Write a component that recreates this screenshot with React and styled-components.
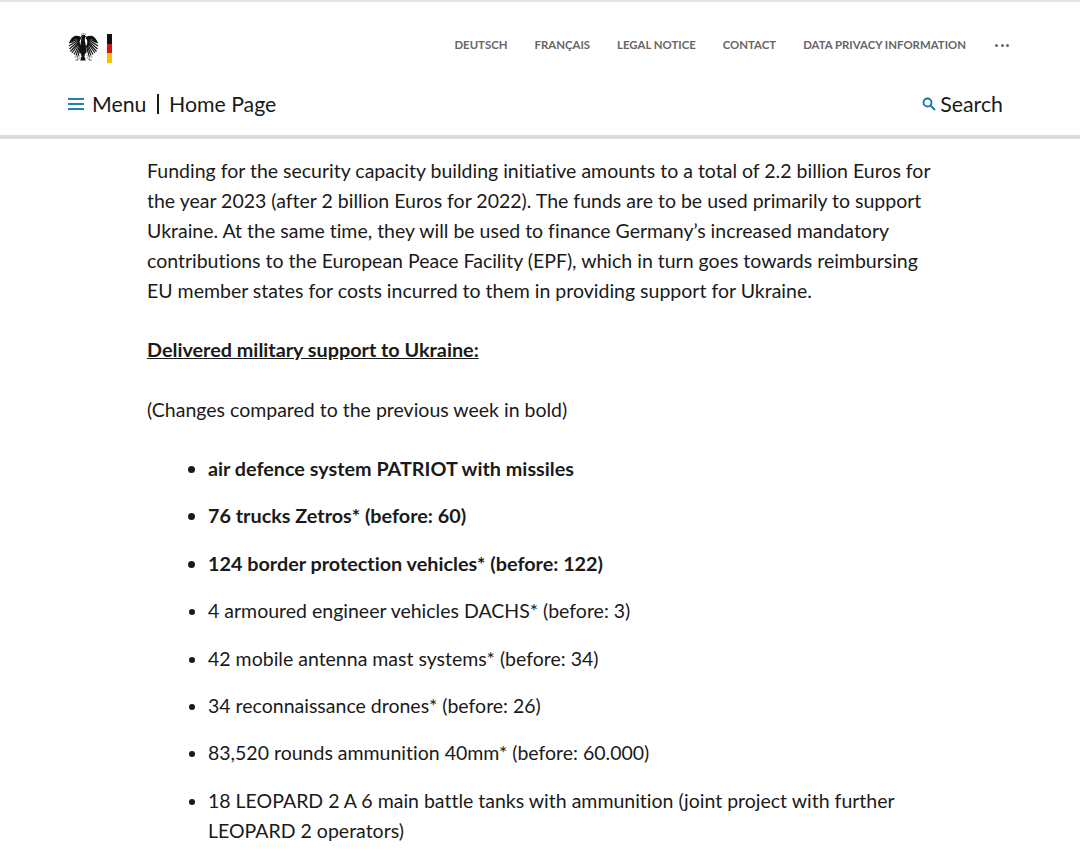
import styled, { createGlobalStyle } from "styled-components";

const GlobalStyle = createGlobalStyle`
  html, body {
    margin: 0;
    padding: 0;
    height: 853px;
    overflow: hidden;
    background: #fff;
    font-family: Lato, "Noto Sans", sans-serif;
    font-variant-ligatures: none;
    color: #1a1a1a;
  }
`;

const Header = styled.header`
  height: 135px;
  box-sizing: border-box;
  border-top: 2px solid #e6e6e6;
  padding: 0 70px 0 68px;
`;

const HeaderRule = styled.div`
  height: 4px;
  background: #dcdcdc;
`;

const TopRow = styled.div`
  display: flex;
  justify-content: space-between;
  align-items: flex-start;
  height: 85px;
  padding-top: 30px;
  box-sizing: border-box;
`;

const Logo = styled.div`
  display: flex;
  align-items: center;
  gap: 8px;
`;

const Flag = styled.div`
  width: 5px;
  height: 29px;
  margin-top: 2px;
  background: linear-gradient(#111 0 33.3%, #d8121a 33.3% 66.6%, #f4c400 66.6%);
`;

const MetaNav = styled.nav`
  display: flex;
  align-items: center;
  gap: 27px;
  height: 24px;
`;

const MetaLink = styled.a`
  font-size: 11.400px;
  font-weight: 700;
  color: #666;
`;

const Dots = styled.span`
  display: flex;
  gap: 2.500px;
  margin: 2px 1px 0 2px;
`;

const Dot = styled.i`
  width: 3px;
  height: 3px;
  border-radius: 50%;
  background: #666;
`;

const BottomRow = styled.div`
  display: flex;
  justify-content: space-between;
  align-items: center;
  height: 34px;
  padding-right: 7px;
`;

const MainLinks = styled.div`
  display: flex;
  align-items: center;
  font-size: 21.300px;
  line-height: 26px;
  color: #1a1a1a;
`;

const Burger = styled.span`
  display: flex;
  flex-direction: column;
  gap: 3px;
  width: 16px;
  margin-right: 8px;
`;

const BurgerLine = styled.i`
  height: 2px;
  background: #1f7fb0;
`;

const Divider = styled.span`
  width: 1.500px;
  height: 20px;
  background: #1a1a1a;
  margin: 0 10px 0 11px;
`;

const SearchLink = styled.div`
  display: flex;
  align-items: center;
  gap: 4px;
  font-size: 21.300px;
  line-height: 26px;
`;

const Content = styled.main`
  padding: 17px 0 0 147px;
  width: 790px;
  font-size: 19.500px;
  line-height: 30px;
`;

const Para = styled.p`
  margin: 0 0 ${(p) => p.$gap || "29.500px"};
`;

const Heading = styled.h2`
  margin: -1.500px 0 31px;
  font-size: 19.800px;
  line-height: 30px;
  font-weight: 700;
  text-decoration: underline;
`;

const List = styled.ul`
  margin: 0;
  padding: 0 0 0 61px;
`;

const Item = styled.li`
  font-size: ${(p) => (p.$bold ? "19.800px" : "19.500px")};
  font-weight: ${(p) => (p.$bold ? 700 : 400)};
  line-height: ${(p) => (p.$bold ? "29px" : "30px")};
  margin-bottom: ${(p) => (p.$bold ? "18.400px" : "17.400px")};
`;

// feather tips of the left wing, the right wing is mirrored
const feathers = [
  ["10 7", "1 11"],
  ["10 8", "1 14"],
  ["10.500 9", "1.500 17"],
  ["11 10", "2.500 19.500"],
  ["11 11", "4 21"],
  ["11.500 12", "6 22.500"],
  ["12 13", "8 23.500"],
  ["12.500 14", "10 24"],
];

function Wing() {
  return (
    <g>
      <path d="M13 5C9 2.500 4 3.500 1.500 10l3 .5C6 7.500 8.500 6 11 8z" fill="#111" />
      <path d="M12.500 5.500C10 8 10 11 12 15" stroke="#111" strokeWidth="2" fill="none" />
      <g stroke="#111" strokeWidth="1.150" fill="none">
        {feathers.map(([from, to]) => (
          <path key={to} d={`M${from}L${to}`} />
        ))}
      </g>
    </g>
  );
}

function Eagle() {
  return (
    <svg width="31" height="31" viewBox="0 0 31 31" aria-hidden="true">
      <Wing />
      <g transform="matrix(-1 0 0 1 31 0)">
        <Wing />
      </g>
      <path
        d="M14 3.500c1-1 2.800-.8 3.200.4l1.800 1.200-2 .3-.2 2.500 1.200 7 .8 5-1.800 2-.6 2.600 1.400 4h-5.600l1.400-4-.6-2.600-1.800-2 .8-5 1.200-7 .2-2.500c-.2-.6-.3-1.500-.3-1.900z"
        fill="#111"
      />
      <g stroke="#8a8a8a" strokeWidth="1" fill="none">
        <path d="M6.500 25c2.500 0 4.500-.5 6-2M7 28c2 .5 4-.5 5.500-3M10 23.500l-1 5.500" />
        <path d="M24.500 25c-2.500 0-4.500-.5-6-2M24 28c-2 .5-4-.5-5.500-3M21 23.500l1 5.500" />
        <path d="M13 2.500c1.500-1 3.500-1 5 0" />
      </g>
    </svg>
  );
}

function SearchIcon() {
  return (
    <svg width="14" height="14" viewBox="0 0 14 14" fill="none" stroke="#0f78a8" strokeWidth="1.800" aria-hidden="true">
      <circle cx="5.500" cy="5.500" r="4" />
      <path d="M8.500 8.500 13 13" />
    </svg>
  );
}

const metaLinks = ["DEUTSCH", "FRANÇAIS", "LEGAL NOTICE", "CONTACT", "DATA PRIVACY INFORMATION"];

const items = [
  { text: "air defence system PATRIOT with missiles", bold: true },
  { text: "76 trucks Zetros* (before: 60)", bold: true },
  { text: "124 border protection vehicles* (before: 122)", bold: true },
  { text: "4 armoured engineer vehicles DACHS* (before: 3)" },
  { text: "42 mobile antenna mast systems* (before: 34)" },
  { text: "34 reconnaissance drones* (before: 26)" },
  { text: "83,520 rounds ammunition 40mm* (before: 60.000)" },
  { text: "18 LEOPARD 2 A 6 main battle tanks with ammunition (joint project with further LEOPARD 2 operators)" },
];

export default function App() {
  return (
    <>
      <GlobalStyle />
      <Header>
        <TopRow>
          <Logo>
            <Eagle />
            <Flag />
          </Logo>
          <MetaNav>
            {metaLinks.map((label) => (
              <MetaLink key={label}>{label}</MetaLink>
            ))}
            <Dots>
              <Dot />
              <Dot />
              <Dot />
            </Dots>
          </MetaNav>
        </TopRow>
        <BottomRow>
          <MainLinks>
            <Burger>
              <BurgerLine />
              <BurgerLine />
              <BurgerLine />
            </Burger>
            Menu
            <Divider />
            Home Page
          </MainLinks>
          <SearchLink>
            <SearchIcon />
            Search
          </SearchLink>
        </BottomRow>
      </Header>
      <HeaderRule />
      <Content>
        <Para>
          Funding for the security capacity building initiative amounts to a total of 2.2 billion Euros for the year
          2023 (after 2 billion Euros for 2022). The funds are to be used primarily to support Ukraine. At the same
          time, they will be used to finance Germany’s increased mandatory contributions to the European Peace Facility
          (EPF), which in turn goes towards reimbursing EU member states for costs incurred to them in providing support
          for Ukraine.
        </Para>
        <Heading>Delivered military support to Ukraine:</Heading>
        <Para $gap="29px">(Changes compared to the previous week in bold)</Para>
        <List>
          {items.map((item) => (
            <Item key={item.text} $bold={item.bold}>
              {item.text}
            </Item>
          ))}
        </List>
      </Content>
    </>
  );
}
